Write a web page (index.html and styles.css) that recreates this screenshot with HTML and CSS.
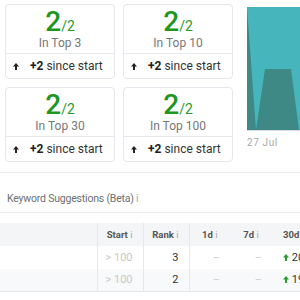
FILE: index.html
```html
<!DOCTYPE html>
<html>
<head>
<meta charset="utf-8">
<link rel="stylesheet" href="styles.css">
</head>
<body>
<div class="page">
  <div class="top">
    <div class="cards">
      <div class="card">
        <div class="card-main">
          <div class="num">2<span class="of">/2</span></div>
          <div class="label">In Top 3</div>
        </div>
        <div class="card-foot">
          <svg class="up" width="6" height="7" viewBox="0 0 6 7"><path d="M3 0L6 3.5H4V7H2V3.5H0Z"/></svg>
          <b>+2</b>&nbsp;since start
        </div>
      </div>
      <div class="card">
        <div class="card-main">
          <div class="num">2<span class="of">/2</span></div>
          <div class="label">In Top 10</div>
        </div>
        <div class="card-foot">
          <svg class="up" width="6" height="7" viewBox="0 0 6 7"><path d="M3 0L6 3.5H4V7H2V3.5H0Z"/></svg>
          <b>+2</b>&nbsp;since start
        </div>
      </div>
      <div class="card">
        <div class="card-main">
          <div class="num">2<span class="of">/2</span></div>
          <div class="label">In Top 30</div>
        </div>
        <div class="card-foot">
          <svg class="up" width="6" height="7" viewBox="0 0 6 7"><path d="M3 0L6 3.5H4V7H2V3.5H0Z"/></svg>
          <b>+2</b>&nbsp;since start
        </div>
      </div>
      <div class="card">
        <div class="card-main">
          <div class="num">2<span class="of">/2</span></div>
          <div class="label">In Top 100</div>
        </div>
        <div class="card-foot">
          <svg class="up" width="6" height="7" viewBox="0 0 6 7"><path d="M3 0L6 3.5H4V7H2V3.5H0Z"/></svg>
          <b>+2</b>&nbsp;since start
        </div>
      </div>
    </div>
    <div class="chart">
      <svg class="chart-svg" width="53" height="124" viewBox="0 0 53 124" preserveAspectRatio="none">
        <rect x="0" y="0" width="53" height="123" fill="#47b6bc"/>
        <polygon points="0,0 9,123 18,62 44,62 52,123 53,123 53,123 0,123" fill="#3e8986"/>
        <line x1="0" y1="123.5" x2="53" y2="123.5" stroke="#d8dcdf" stroke-width="1"/>
      </svg>
      <div class="axis">27 Jul</div>
    </div>
  </div>

  <div class="section">Keyword Suggestions (Beta) <span class="info">i</span></div>

  <div class="table-wrap">
    <table class="kw">
      <colgroup>
        <col class="c-kw"><col class="c-num"><col class="c-num"><col class="c-d1"><col class="c-d7"><col class="c-d30">
      </colgroup>
      <thead>
        <tr>
          <th class="sep"></th>
          <th class="sep r">Start <span class="info">i</span></th>
          <th class="sep r">Rank <span class="info">i</span></th>
          <th class="c">1d <span class="info">i</span></th>
          <th class="c">7d <span class="info">i</span></th>
          <th class="l30">30d <span class="info">i</span></th>
        </tr>
      </thead>
      <tbody>
        <tr>
          <td class="sep"></td>
          <td class="sep r muted">&gt; 100</td>
          <td class="sep r">3</td>
          <td class="r dash">–</td>
          <td class="r dash">–</td>
          <td class="l30 chg"><svg class="gup" width="6" height="7" viewBox="0 0 6 7"><path d="M3 0L6 3.5H4V7H2V3.5H0Z"/></svg> 20</td>
        </tr>
        <tr class="alt">
          <td class="sep"></td>
          <td class="sep r muted">&gt; 100</td>
          <td class="sep r">2</td>
          <td class="r dash">–</td>
          <td class="r dash">–</td>
          <td class="l30 chg"><svg class="gup" width="6" height="7" viewBox="0 0 6 7"><path d="M3 0L6 3.5H4V7H2V3.5H0Z"/></svg> 19</td>
        </tr>
      </tbody>
    </table>
  </div>
</div>
</body>
</html>
```

FILE: styles.css
```css
html, body {
  margin: 0;
  padding: 0;
  background: #fff;
}
body {
  font-family: Roboto, "Noto Sans", Arial, sans-serif;
  color: #333;
  width: 300px;
  height: 300px;
  overflow: hidden;
}
.page {
  width: 300px;
  overflow: hidden;
}
.top {
  display: flex;
  gap: 14px;
  padding: 4px 0 0 5px;
  margin-bottom: 10px;
}
.cards {
  display: grid;
  grid-template-columns: 110px 110px;
  gap: 8px;
}
.card {
  border: 1px solid #e3e7eb;
  border-radius: 4px;
  background: #fff;
}
.card-main {
  padding: 3px 0 3px;
  text-align: center;
  border-bottom: 1px solid #e6e9ec;
}
.num {
  font-size: 28px;
  line-height: 28px;
  height: 28px;
  font-weight: 500;
  color: #1e961e;
}
.of {
  font-size: 14px;
  line-height: 1;
  font-weight: 400;
  color: #2a9a2a;
}
.label {
  font-size: 12px;
  line-height: 14px;
  color: #777;
}
.card-foot {
  height: 24px;
  display: flex;
  align-items: center;
  padding-left: 7px;
  font-size: 12px;
  color: #333;
}
.card-foot b {
  font-weight: 700;
  color: #222;
}
.up {
  fill: #222;
  margin-right: 11px;
}
.chart {
  flex: 1;
  padding-top: 3px;
}
.chart-svg {
  display: block;
}
.axis {
  font-size: 10px;
  color: #a8a8a8;
  letter-spacing: 0.6px;
  margin-top: 6px;
  line-height: 12px;
}
.section {
  border-top: 1px solid #e9ebee;
  border-bottom: 1px solid #e9ebee;
  padding: 18px 0 5px 7px;
  font-size: 10.5px;
  letter-spacing: -0.2px;
  line-height: 16px;
  color: #6f6f6f;
}
.info {
  color: #aaa;
  font-weight: 400;
}
.table-wrap {
  margin-top: 10px;
  width: 300px;
  overflow: hidden;
}
.kw {
  border-collapse: collapse;
  table-layout: fixed;
  width: 314px;
  font-size: 11px;
}
.c-kw { width: 97px; }
.c-num { width: 46px; }
.c-d1 { width: 41px; }
.c-d7 { width: 42px; }
.c-d30 { width: 42px; }
.kw th {
  background: #f4f5f7;
  height: 23px;
  padding: 0 10px 0 0;
  font-size: 9.5px;
  font-weight: 700;
  color: #555;
  white-space: nowrap;
  box-sizing: border-box;
}
.kw td {
  height: 23px;
  padding: 0 10px 0 0;
  color: #333;
  white-space: nowrap;
  box-sizing: border-box;
}
.kw tr.alt td {
  height: 22px;
  background: #f8f9fa;
}
.kw tbody tr:last-child td {
  border-bottom: 1px solid #e6e8eb;
}
.sep {
  border-right: 1px solid #e6e8eb;
}
.r { text-align: right; }
.kw th.c { text-align: center; padding: 0; }
.kw th.l30 { text-align: left; padding-left: 11px; }
.kw td.l30 { text-align: left; padding-left: 11px; }
.muted { color: #c8c8c8 !important; }
.dash { color: #d0d0d0 !important; }
.gup { fill: #2a9d2a; }
```
